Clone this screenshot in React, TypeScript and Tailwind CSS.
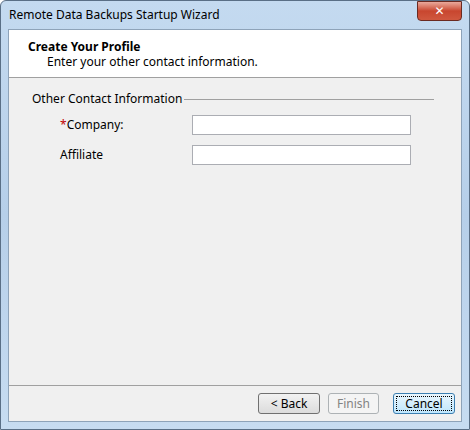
export default function App() {
  return (
    <div className="w-[470px] h-[430px] flex flex-col rounded-t-[6px] border border-[#5a6f86] bg-gradient-to-b from-[#c4daf0] via-[#b6cfe9] to-[#c7dcf1] px-[7px] pb-[7px] text-[12px] text-black" style={{ fontFamily: '"Segoe UI", "Noto Sans", "DejaVu Sans", sans-serif' }}>
      <div className="h-[28px] flex items-center justify-between">
        <span className="pl-[1px] text-[12px] text-black">Remote Data Backups Startup Wizard</span>
        <div className="-mt-[8px] w-[45px] h-[20px] rounded-b-[4px] border border-[#6b2a21] bg-gradient-to-b from-[#e9a99c] via-[#c8462f] to-[#d0583f] flex items-center justify-center text-white font-bold text-[12px]">✕</div>
      </div>
      <div className="flex-1 flex flex-col border border-[#8ea3b9] bg-[#f0f0f0]">
        <div className="h-[48px] bg-white border-b border-[#a0a0a0] pl-[19px] pt-[9px] leading-[15px]">
          <div className="font-bold">Create Your Profile</div>
          <div className="pl-[19px]">Enter your other contact information.</div>
        </div>
        <div className="flex-1 pl-[23px] pr-[27px] pt-[12px]">
          <div className="flex items-center gap-[2px]">
            <span>Other Contact Information</span>
            <div className="flex-1 h-[1px] bg-[#a0a0a0] mt-[1px]" />
          </div>
          <div className="mt-[7px] flex items-center">
            <span className="w-[160px] pl-[28px]"><span className="text-[#c00000]">*</span>Company:</span>
            <div className="w-[219px] h-[20px] bg-white border border-[#abadb3]" />
          </div>
          <div className="mt-[10px] flex items-center">
            <span className="w-[160px] pl-[28px]">Affiliate</span>
            <div className="w-[219px] h-[20px] bg-white border border-[#abadb3]" />
          </div>
        </div>
        <div className="h-[36px] border-t border-[#a0a0a0] flex items-center justify-end pr-[6px] gap-[8px]">
          <div className="w-[62px] h-[21px] rounded-[3px] border border-[#707070] bg-gradient-to-b from-[#f2f2f2] to-[#dcdcdc] flex items-center justify-center">&lt; Back</div>
          <div className="w-[51px] h-[21px] rounded-[3px] border border-[#adb2b5] bg-[#f4f4f4] text-[#838383] flex items-center justify-center mr-[6px]">Finish</div>
          <div className="w-[62px] h-[21px] rounded-[3px] border border-[#3c7fb1] bg-gradient-to-b from-[#eaf6fd] to-[#bee6fd] flex items-center justify-center p-[2px]">
            <div className="w-full h-full border border-dotted border-black flex items-center justify-center">Cancel</div>
          </div>
        </div>
      </div>
    </div>
  );
}
